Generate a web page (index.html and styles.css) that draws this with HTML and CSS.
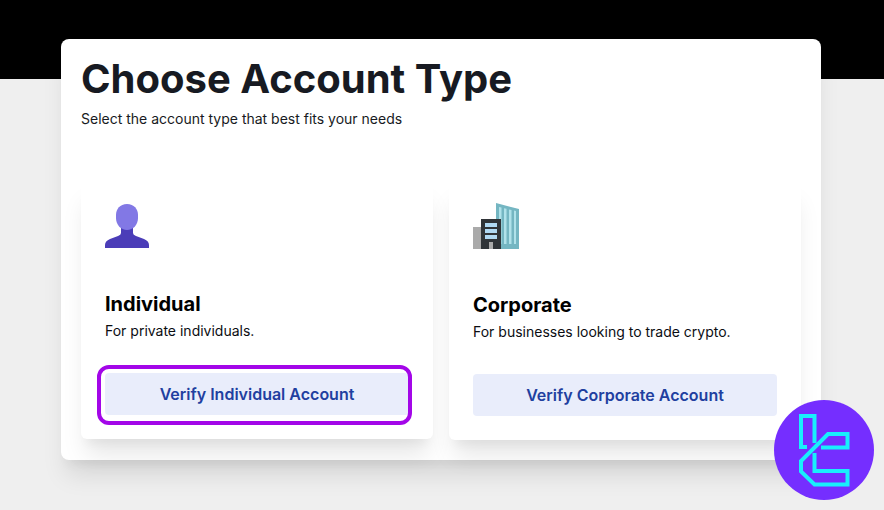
FILE: index.html
```html
<!DOCTYPE html>
<html lang="en">
<head>
    <meta charset="UTF-8">
    <meta name="viewport" content="width=device-width, initial-scale=1.0">
    <title>Choose Account Type</title>
    <link rel="stylesheet" href="styles.css">
</head>
<body>
    <main class="panel">
        <h1 class="panel-title">Choose Account Type</h1>
        <p class="panel-subtitle">Select the account type that best fits your needs</p>

        <div class="account-list">
            <section class="account-card">
                <svg class="account-icon" width="44" height="45" viewBox="0 0 44 45" aria-hidden="true">
                    <path d="M16 23h12v7q0 2 3 3l8 3q5 2 5 6v3H0v-3q0-4 5-6l8-3q3-1 3-3z" fill="#4b3db8"/>
                    <path d="M22 1c7 0 11 5 11 11v3c0 7-5 12-11 12s-11-5-11-12v-3c0-6 4-11 11-11z" fill="#8278e5"/>
                </svg>
                <h2 class="account-name">Individual</h2>
                <p class="account-text">For private individuals.</p>
                <div class="account-action highlighted">
                    <button type="button" class="btn">Verify Individual Account</button>
                </div>
            </section>

            <section class="account-card">
                <svg class="account-icon" width="46" height="46" viewBox="0 0 46 46" aria-hidden="true">
                    <path d="M23 0l23 6v40H23z" fill="#74b6c2"/>
                    <path d="M26 4l2.500.6V41H26zM31 5.200l2.500.6V41H31zM36 6.400l2.500.6V41H36zM41 7.600l2 .5V41h-2z" fill="#b0e2ea"/>
                    <path d="M0 24h8v22H0z" fill="#aaa"/>
                    <path d="M8 16h20v30H8z" fill="#303438"/>
                    <path d="M12 20h12v4H12zM12 26h12v4H12zM12 32h12v4H12z" fill="#b0d9f3"/>
                    <path d="M16 39h4v7h-4z" fill="#aaa"/>
                </svg>
                <h2 class="account-name">Corporate</h2>
                <p class="account-text">For businesses looking to trade crypto.</p>
                <div class="account-action">
                    <button type="button" class="btn">Verify Corporate Account</button>
                </div>
            </section>
        </div>
    </main>

    <svg class="brand-badge" viewBox="0 0 100 100" role="img" aria-label="Logo">
        <circle cx="50" cy="50" r="50" fill="#752eff"/>
        <g fill="none" stroke="#18effc" stroke-width="4">
            <path d="M33 47h-6V16h13.500v27"/>
            <path d="M47 47.500h26.500V34H54L27 61v10.500l13.500 13h33V71h-33V53"/>
        </g>
    </svg>
</body>
</html>
```

FILE: styles.css
```css
* {
    margin: 0;
    padding: 0;
    box-sizing: border-box;
}

body {
    font-family: Inter, "Liberation Sans", sans-serif;
    background: linear-gradient(#000, #000) top / 100% 79px no-repeat #efefef;
    color: #0b0d12;
    min-height: 100vh;
    padding: 39px 63px 50px 61px;
}

.panel {
    background: #fff;
    padding: 20px;
    border-radius: 8px;
    box-shadow: 0 20px 25px -5px rgba(0, 0, 0, 0.1), 0 10px 10px -5px rgba(0, 0, 0, 0.04);
}

.panel-title {
    font-size: 40px;
    font-weight: 700;
    line-height: 40px;
    color: #171a22;
}

.panel-subtitle {
    margin-top: 10px;
    font-size: 14px;
    line-height: 20px;
    color: #171a22;
}

.account-list {
    display: grid;
    grid-template-columns: 1fr 1fr;
    align-items: start;
    gap: 16px;
    margin-top: 50px;
}

.account-card {
    background: #fff;
    padding: 24px;
    border-radius: 6px;
    box-shadow: 0 20px 25px -5px rgba(0, 0, 0, 0.1), 0 10px 10px -5px rgba(0, 0, 0, 0.04);
}

.account-icon {
    display: block;
}

.account-name {
    margin-top: 42px;
    font-size: 20px;
    font-weight: 700;
    line-height: 28px;
    color: #000;
}

.account-text {
    margin-top: 3px;
    font-size: 14px;
    line-height: 20px;
}

.account-action {
    position: relative;
    margin-top: 32px;
}

/* ring around the suggested choice */
.highlighted::after {
    content: "";
    position: absolute;
    inset: -8px -3px -10px -8px;
    border: 4px solid #a306e8;
    border-radius: 12px;
    pointer-events: none;
}

.btn {
    display: block;
    width: 100%;
    padding: 9px 16px;
    border: none;
    border-radius: 4px;
    background: #e9edfb;
    color: #213fa0;
    font-family: inherit;
    font-size: 16px;
    font-weight: 600;
    line-height: 24px;
    cursor: pointer;
}

.btn:hover {
    background: #dce3f9;
}

.brand-badge {
    position: fixed;
    right: 10px;
    bottom: 10px;
    width: 100px;
    height: 100px;
}

@media (max-width: 600px) {
    body {
        padding: 39px 16px 120px;
    }

    .account-list {
        grid-template-columns: 1fr;
    }
}
```
